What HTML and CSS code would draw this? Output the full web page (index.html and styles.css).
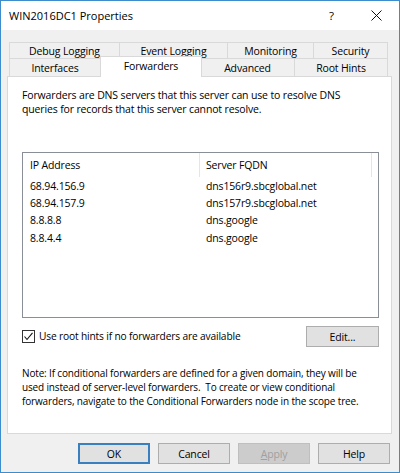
FILE: index.html
```html
<!DOCTYPE html>
<html>
<head>
<meta charset="utf-8">
<title>WIN2016DC1 Properties</title>
<link rel="stylesheet" href="styles.css">
</head>
<body>
<div class="window">
  <div class="titlebar">
    <span class="title">WIN2016DC1 Properties</span>
    <span class="cap-btn help">?</span>
    <span class="cap-btn close"><svg width="11" height="11" viewBox="0 0 11 11"><path d="M0.5 0.5L10.5 10.5M10.5 0.5L0.5 10.5" stroke="#111" stroke-width="1" fill="none"/></svg></span>
  </div>
  <div class="client">
    <div class="tabs">
      <div class="tab-row row1">
        <div class="tab first w-debug">Debug Logging</div>
        <div class="tab w-event">Event Logging</div>
        <div class="tab w-mon">Monitoring</div>
        <div class="tab w-sec">Security</div>
      </div>
      <div class="tab-row row2">
        <div class="tab first w-if">Interfaces</div>
        <div class="tab sel w-fwd">Forwarders</div>
        <div class="tab w-adv">Advanced</div>
        <div class="tab w-root">Root Hints</div>
      </div>
    </div>
    <div class="panel">
      <p class="desc">Forwarders are DNS servers that this server can use to resolve DNS<br>queries for records that this server cannot resolve.</p>
      <div class="listbox">
        <div class="lv-header">
          <div class="col c1">IP Address</div>
          <div class="col c2">Server FQDN</div>
        </div>
        <div class="lv-row"><div class="col c1">68.94.156.9</div><div class="col c2">dns156r9.sbcglobal.net</div></div>
        <div class="lv-row"><div class="col c1">68.94.157.9</div><div class="col c2">dns157r9.sbcglobal.net</div></div>
        <div class="lv-row"><div class="col c1">8.8.8.8</div><div class="col c2">dns.google</div></div>
        <div class="lv-row"><div class="col c1">8.8.4.4</div><div class="col c2">dns.google</div></div>
      </div>
      <div class="opt-row">
        <label class="check">
          <span class="box"><svg width="11" height="11" viewBox="0 0 11 11"><path d="M1.5 5.5L4 8.5L9.5 1.8" stroke="#111" stroke-width="1.1" fill="none"/></svg></span>
          <span class="check-label">Use root hints if no forwarders are available</span>
        </label>
        <button class="btn edit">Edit...</button>
      </div>
      <p class="note">Note: If conditional forwarders are defined for a given domain, they will be<br>used instead of server-level forwarders.&nbsp; To create or view conditional<br>forwarders, navigate to the Conditional Forwarders node in the scope tree.</p>
    </div>
    <div class="buttons">
      <button class="btn default">OK</button>
      <button class="btn">Cancel</button>
      <button class="btn disabled"><u>A</u>pply</button>
      <button class="btn">Help</button>
    </div>
  </div>
</div>
</body>
</html>
```

FILE: styles.css
```css
* {
  box-sizing: border-box;
  margin: 0;
  padding: 0;
}

html, body {
  width: 400px;
  height: 473px;
  overflow: hidden;
}

body {
  font-family: "Open Sans", "Noto Sans", sans-serif;
  font-size: 10.5px;
  letter-spacing: -0.15px;
  color: #000;
  background: #f0f0f0;
}

.window {
  width: 400px;
  height: 473px;
  border: 1px solid #3d8ccc;
  display: flex;
  flex-direction: column;
  background: #f0f0f0;
}

.titlebar {
  height: 29px;
  background: #fff;
  display: flex;
  align-items: center;
  flex: none;
}

.title {
  flex: 1;
  padding-left: 8px;
  font-size: 11px;
  letter-spacing: 0;
}

.cap-btn {
  width: 45px;
  height: 29px;
  display: flex;
  align-items: center;
  justify-content: center;
}

.help {
  font-size: 11.5px;
  letter-spacing: 0;
  padding-bottom: 1px;
}

.client {
  flex: 1;
  padding: 12px 6px 0 6px;
  display: flex;
  flex-direction: column;
}

/* Tabs */
.tabs {
  margin-left: 2px;
  width: 379px;
  position: relative;
  z-index: 1;
}

.tab-row {
  display: flex;
}

.row1 { height: 16px; }
.row2 { height: 18px; }

.tab {
  height: 100%;
  background: #f0f0f0;
  border-top: 1px solid #d9d9d9;
  border-right: 1px solid #d9d9d9;
  display: flex;
  align-items: center;
  justify-content: center;
  white-space: nowrap;
  flex: none;
}

.tab.first {
  border-left: 1px solid #d9d9d9;
}

.tab.sel {
  background: #fff;
  border-left: 1px solid #d9d9d9;
  height: 21px;
  margin: -2px -1px -1px -1px;
  align-self: flex-start;
  position: relative;
  z-index: 2;
  padding-bottom: 2px;
}

.w-debug { width: 111px; }
.w-event { width: 108px; }
.w-mon { width: 86px; }
.w-sec { width: 74px; }
.w-if { width: 92px; }
.w-fwd { width: 102px; }
.w-adv { width: 94px; }
.w-root { width: 93px; }

/* Panel */
.panel {
  width: 385px;
  height: 358px;
  flex: none;
  background: #fff;
  border: 1px solid #d9d9d9;
  padding: 11px 12px 0 14px;
}

.desc {
  line-height: 14px;
}

.listbox {
  margin-top: 36px;
  width: 357px;
  height: 166px;
  border: 1px solid #8a8e96;
  background: #fff;
}

.lv-header {
  display: flex;
  height: 24px;
}

.lv-row {
  display: flex;
  height: 17.33px;
}

.col {
  display: flex;
  align-items: center;
  white-space: nowrap;
}

.c1 {
  width: 177px;
  padding-left: 7px;
}

.c2 {
  width: 172px;
  padding-left: 6px;
}

.lv-header .c1,
.lv-header .c2 {
  border-right: 1px solid #e5e5e5;
}

.opt-row {
  margin-top: 8px;
  width: 357px;
  height: 21px;
  display: flex;
  align-items: center;
  justify-content: space-between;
}

.check {
  display: flex;
  align-items: center;
  padding-bottom: 1px;
}

.check-label {
  font-size: 10.2px;
}

.box {
  width: 13px;
  height: 13px;
  border: 1px solid #333;
  background: #fff;
  margin-right: 4px;
  display: flex;
  align-items: center;
  justify-content: center;
}

.box svg {
  display: block;
}

.note {
  margin-top: 19px;
  line-height: 14px;
  font-size: 10px;
}

/* Buttons */
.btn {
  font-family: inherit;
  font-size: inherit;
  letter-spacing: inherit;
  color: #000;
  background: #e1e1e1;
  border: 1px solid #adadad;
  height: 21px;
  width: 72px;
  display: flex;
  align-items: center;
  justify-content: center;
}

.edit {
  width: 73px;
}

.buttons {
  margin-top: 9px;
  display: flex;
  gap: 8px;
  justify-content: flex-end;
  padding-right: 3px;
}

.btn.default {
  border: 2px solid #3a7fc0;
}

.btn.disabled {
  background: #cccccc;
  border-color: #bfbfbf;
  color: #a0a0a0;
}

.btn.disabled u {
  text-decoration: underline;
}
```
